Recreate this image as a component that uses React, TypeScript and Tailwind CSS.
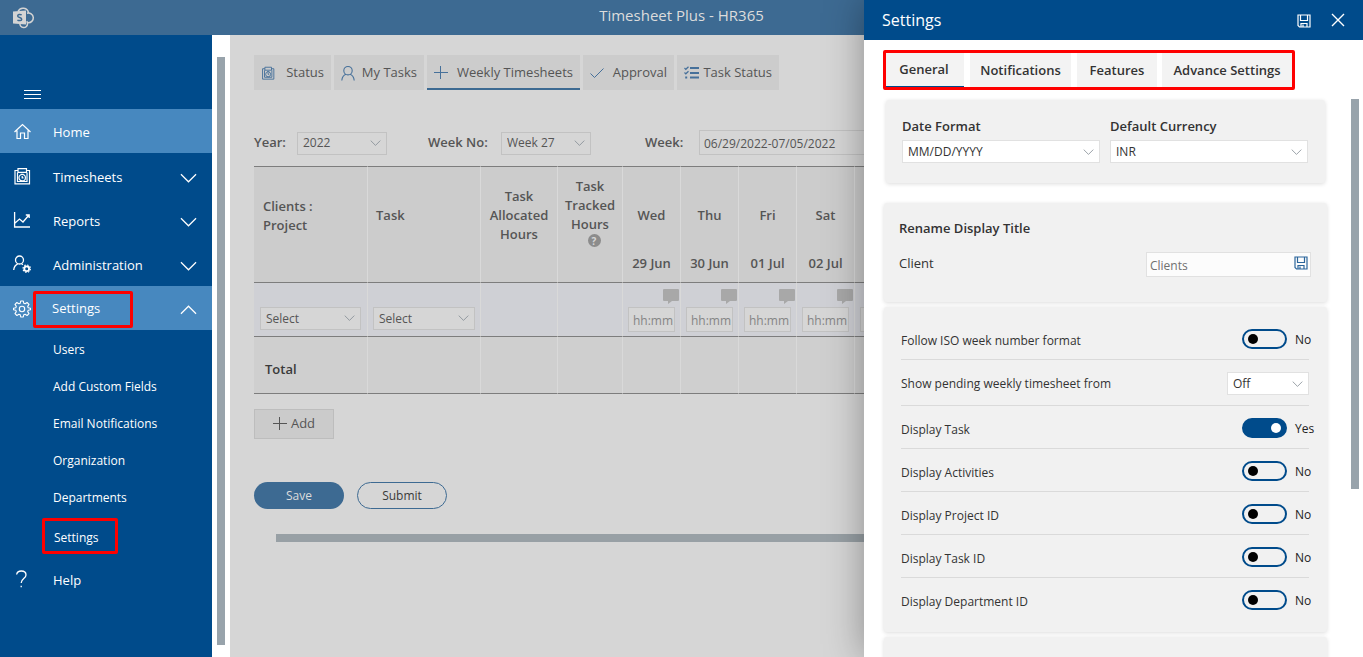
import React, { useState } from "react";

const sans = "font-['Open_Sans','Noto_Sans',sans-serif]";

type SvgProps = { className?: string };

const Chevron = ({ className = "" }: SvgProps) => (
  <svg viewBox="0 0 18 10" fill="none" stroke="currentColor" strokeWidth="1.3" className={className} aria-hidden="true">
    <path d="M1 1l8 8 8-8" />
  </svg>
);

const HomeIcon = () => (
  <svg viewBox="0 0 18 18" width="18" height="18" fill="none" stroke="currentColor" strokeWidth="1.2" aria-hidden="true">
    <path d="M1.500 10L9.500 2.600 17.500 10M4 8.500V16.500h3.500V11h4v5.500H15V8.500" />
  </svg>
);

const TimesheetIcon = ({ size = 18 }: { size?: number }) => (
  <svg viewBox="0 0 18 18" width={size} height={size} fill="none" stroke="currentColor" strokeWidth="1.2" aria-hidden="true">
    <path d="M5 3.500H2v13.400h14.500V3.500H13.500M5 1.600h8.500v3.800H5zM4.500 5.500v9h9.500v-9" />
    <circle cx="9.200" cy="10.700" r="3.200" />
    <path d="M9.200 9v1.800h1.300M7.800 7.300h2.800" />
  </svg>
);

const ChartIcon = () => (
  <svg viewBox="0 0 18 18" width="18" height="18" fill="none" stroke="currentColor" strokeWidth="1.3" aria-hidden="true">
    <path d="M1.600 1v15H17M2 12l4.500-4 3.500 3 6-7M12.800 4H16.200v3" />
  </svg>
);

const PersonIcon = () => (
  <svg viewBox="0 0 14 16" width="14" height="16" fill="none" stroke="currentColor" strokeWidth="1.100" aria-hidden="true">
    <circle cx="7" cy="5.700" r="4.200" />
    <path d="M.8 15.500c.3-3.400 2-5.400 4.200-6.200M13.200 15.500c-.3-3.400-2-5.400-4.200-6.200" />
  </svg>
);

const AdminIcon = () => (
  <svg viewBox="0 0 18 18" width="18" height="18" fill="none" stroke="currentColor" strokeWidth="1.3" aria-hidden="true">
    <circle cx="6.500" cy="5" r="4" />
    <path d="M.7 15c.3-3.200 1.500-5 4-6.200M8.500 8.800l1.500.9" />
    <circle cx="13.700" cy="13.700" r="2.400" strokeWidth="1.800" />
    <circle cx="13.700" cy="13.700" r="3.700" strokeWidth="1.200" strokeDasharray="1.500 1.400" />
  </svg>
);

const GearIcon = () => (
  <svg viewBox="0 0 18 18" width="18" height="18" fill="none" stroke="currentColor" strokeWidth="1.100" strokeLinejoin="round" aria-hidden="true">
    <path d="M7.700 1h2.600l.5 2.300 1.300.5 2-1.300 1.900 1.900-1.300 2 .5 1.300 2.300.5v1.600l-2.300.5-.5 1.300 1.300 2-1.900 1.900-2-1.300-1.300.5-.5 2.300H7.700l-.5-2.300-1.300-.5-2 1.300L2 13.600l1.300-2-.5-1.300L.5 9.800V8.200l2.300-.5.5-1.300-1.300-2L3.900 2.500l2 1.300 1.300-.5z" />
    <circle cx="9" cy="9" r="2.700" />
  </svg>
);

const HelpIcon = () => (
  <svg viewBox="0 0 18 18" width="18" height="18" fill="none" stroke="currentColor" strokeWidth="1.3" aria-hidden="true">
    <path d="M3.600 4.500C4 2.300 5.800 1 8.300 1c2.700 0 4.700 1.600 4.700 4 0 3.700-4.800 3.600-4.800 8M8.200 15.700v1.500" />
  </svg>
);

const SaveIcon = () => (
  <svg viewBox="0 0 14 14" width="14" height="14" fill="none" stroke="currentColor" strokeWidth="1.200" aria-hidden="true">
    <path d="M1 1h12v12H2.500L1 11.500zM3.500 1v5.500h7V1M4 13V9.500h6V13M6 10.500V13" />
  </svg>
);

const CloseIcon = () => (
  <svg viewBox="0 0 14 14" width="14" height="14" fill="none" stroke="currentColor" strokeWidth="1.400" aria-hidden="true">
    <path d="M1 1l12 12M13 1L1 13" />
  </svg>
);

const PlusIcon = () => (
  <svg viewBox="0 0 14 14" width="14" height="14" fill="none" stroke="currentColor" aria-hidden="true">
    <path d="M6.500 0v13M0 6.500h14" />
  </svg>
);

const CheckIcon = () => (
  <svg viewBox="0 0 14 12" width="14" height="12" fill="none" stroke="currentColor" aria-hidden="true">
    <path d="M.5 6.500l4 4 9-9" />
  </svg>
);

const TaskListIcon = () => (
  <svg viewBox="0 0 15 13" width="15" height="13" fill="none" stroke="currentColor" strokeWidth="1.200" aria-hidden="true">
    <path d="M.5 2l1.300 1.300L4.500.7M.5 6.500l1.300 1.300L4.500 5.200" />
    <path d="M6 2h9M6 7h9M6 11.500h9" strokeWidth="1.800" />
    <path d="M1.200 11.500h2" strokeWidth="2" />
  </svg>
);

const CommentIcon = () => (
  <svg viewBox="0 0 16 15" width="16" height="15" fill="currentColor" aria-hidden="true">
    <path d="M1 0h14a1 1 0 011 1v10a1 1 0 01-1 1H9l-4 3v-3H1a1 1 0 01-1-1V1a1 1 0 011-1z" />
  </svg>
);

const SharePointLogo = () => (
  <svg viewBox="0 0 22 22" width="22" height="22" aria-hidden="true" className="text-[#d4d4d4]">
    <g fill="none" stroke="currentColor" strokeWidth="1.500">
      <path d="M5 4.500A5.500 5.500 0 0115.500 6" />
      <path d="M14 6.300a4.800 4.800 0 11.800 9.300" />
      <path d="M7 16a3.800 3.800 0 107.500.5c0-1-.3-1.500-.8-2.200" />
    </g>
    <path d="M0 4.500L13 3.500v14L0 16.500z" fill="currentColor" />
    <path d="M8.700 7.900c-1.800-.8-4-.4-4 1 0 1.900 4 1.300 4 3.300 0 1.500-2.500 1.800-4.300.9" fill="none" stroke="#3d6a92" strokeWidth="1.500" />
  </svg>
);

type DropProps = { label: string; value: string; options: string[]; id: string; className?: string; tone?: string };

const Dropdown = ({ label, value, options, id, className = "", tone = "border-[#e1e1e1] bg-white text-[#333]" }: DropProps) => (
  <div className={`grid items-center ${className}`}>
    <select
      id={id}
      aria-label={label}
      defaultValue={value}
      className={`col-start-1 row-start-1 h-[23px] w-full appearance-none border pl-[5px] pr-6 text-[12px] outline-none ${tone}`}
    >
      {options.map((o) => (
        <option key={o}>{o}</option>
      ))}
    </select>
    <Chevron className="pointer-events-none col-start-1 row-start-1 mr-1.5 h-[6px] w-[11px] justify-self-end text-[#808890]" />
  </div>
);

const dimTone = "border-[#c2c2c2] bg-[#d6d6d6] text-[#555]";

const menu = [
  { label: "Home", icon: <HomeIcon />, active: true, expand: false },
  { label: "Timesheets", icon: <TimesheetIcon />, active: false, expand: true },
  { label: "Reports", icon: <ChartIcon />, active: false, expand: true },
  { label: "Administration", icon: <AdminIcon />, active: false, expand: true },
];

const subMenu = ["Users", "Add Custom Fields", "Email Notifications", "Organization", "Departments"];

const Sidebar = () => (
  <div className="flex w-[230px] shrink-0 bg-white">
    <nav className="flex w-[212px] flex-col bg-[#004b8b] text-[13px] text-white">
      <div className="flex h-[74px] items-end pb-2.5 pl-6">
        <button aria-label="Toggle menu" className="flex flex-col gap-[3px]">
          <span className="h-px w-[17px] bg-white" />
          <span className="h-px w-[17px] bg-white" />
          <span className="h-px w-[17px] bg-white" />
        </button>
      </div>
      {menu.map((m) => (
        <a
          key={m.label}
          href="#"
          className={`flex h-11 items-center pl-[13px] pr-[15px] ${m.active ? "mb-px bg-[#4788bf]" : ""}`}
        >
          {m.icon}
          <span className="ml-[22px] flex-1 pt-[3px]">{m.label}</span>
          {m.expand && <Chevron className="mt-[3px] h-[10px] w-[17px]" />}
        </a>
      ))}
      <a href="#" className="flex h-11 items-center bg-[#4788bf] pt-0.5 pl-[13px] pr-[15px]">
        <GearIcon />
        <span className="ml-0.5 flex h-[37px] w-[100px] items-center rounded-[2px] border-3 border-[#fe0000] pl-4">Settings</span>
        <Chevron className="mt-0.5 ml-auto h-[10px] w-[17px] rotate-180" />
      </a>
      <div className="flex flex-col text-[12px]">
        {subMenu.map((s) => (
          <a key={s} href="#" className="flex h-[37px] items-center pt-0.5 pl-[53px]">
            {s}
          </a>
        ))}
        <a href="#" className="mt-[3px] ml-[42px] flex h-9 w-[76px] items-center rounded-[2px] border-3 border-[#fe0000] pt-[3px] pl-[9px]">
          Settings
        </a>
      </div>
      <a href="#" className="mt-[3px] flex h-11 items-center pl-[13px]">
        <HelpIcon />
        <span className="ml-[22px] pt-[3px]">Help</span>
      </a>
    </nav>
    <div className="flex flex-1 justify-center pt-[22px] pb-3">
      <div className="w-2 bg-[#98a3ab]" />
    </div>
  </div>
);

const tabs = [
  { label: "Status", icon: <TimesheetIcon size={14} />, width: "w-[77px]" },
  { label: "My Tasks", icon: <PersonIcon />, width: "w-[90px]" },
  { label: "Weekly Timesheets", icon: <PlusIcon />, width: "w-[153px]" },
  { label: "Approval", icon: <CheckIcon />, width: "w-[91px]" },
  { label: "Task Status", icon: <TaskListIcon />, width: "w-[102px]" },
];

const days = [
  ["Wed", "29 Jun"],
  ["Thu", "30 Jun"],
  ["Fri", "01 Jul"],
  ["Sat", "02 Jul"],
];

const th = "border-r border-r-[#d9d9d9] border-y border-y-[#7d7d7d] bg-[#cccccc] font-semibold";
const td = "border-r border-r-[#d9d9d9] border-b border-b-[#7d7d7d]";

const HoursField = ({ label, placeholder }: { label: string; placeholder?: string }) => (
  <input
    aria-label={label}
    placeholder={placeholder}
    className="h-[25px] w-[47px] border border-[#c2c2c2] bg-[#d6d6d6] pt-[3px] pl-1 text-[12px] outline-none placeholder:text-[#858585]"
  />
);

const Timesheet = () => (
  <table className="mt-[11px] w-[659px] table-fixed border-separate border-spacing-0 text-[13px] leading-[19px] text-[#555]">
    <colgroup>
      <col className="w-[114px]" />
      <col className="w-[113px]" />
      <col className="w-[77px]" />
      <col className="w-[65px]" />
      {days.map((d) => (
        <col key={d[0]} className="w-[58px]" />
      ))}
      <col className="w-[58px]" />
    </colgroup>
    <thead>
      <tr className="h-[117px]">
        <th className={`${th} pb-[18px] pl-[9px] text-left`}>
          Clients :<br />
          Project
        </th>
        <th className={`${th} pb-[18px] pl-2 text-left`}>Task</th>
        <th className={`${th} pb-[18px]`}>Task Allocated Hours</th>
        <th className={`${th} pb-[25px]`}>
          Task Tracked Hours
          <span className="flex justify-center pl-2">
            <span className="flex size-[13px] items-center justify-center rounded-full bg-[#8c8c8c] text-[10px] leading-none font-bold text-[#d6d6d6]">
              ?
            </span>
          </span>
        </th>
        {days.map((d) => (
          <th key={d[0]} className={th}>
            <div className="pt-[29px] pb-[29px]">{d[0]}</div>
            <div>{d[1]}</div>
          </th>
        ))}
        <th className={th} />
      </tr>
    </thead>
    <tbody>
      <tr className="h-[54px] bg-[#cfd0d5]">
        <td className={`${td} px-1.5 pt-[17px]`}>
          <Dropdown id="client" label="Client" value="Select" options={["Select"]} tone={dimTone} />
        </td>
        <td className={`${td} px-[5px] pt-[17px]`}>
          <Dropdown id="task" label="Task" value="Select" options={["Select"]} tone={dimTone} />
        </td>
        <td className={td} />
        <td className={td} />
        {days.map((d) => (
          <td key={d[0]} className={`${td} pt-px`}>
            <div className="flex flex-col gap-[3px] pl-[5px]">
              <button aria-label={`Comment ${d[0]}`} className="self-end pr-px text-[#a8a8a8]">
                <CommentIcon />
              </button>
              <HoursField label={`Hours ${d[1]}`} placeholder="hh:mm" />
            </div>
          </td>
        ))}
        <td className={`${td} pt-[19px] pl-[5px]`}>
          <HoursField label="Hours 03 Jul" />
        </td>
      </tr>
      <tr className="h-[57px] bg-[#cfcfcf]">
        <td className={`${td} pt-2 pl-[11px] font-semibold text-[#3a3a3a]`}>Total</td>
        {Array.from({ length: 8 }, (_, i) => (
          <td key={i} className={td} />
        ))}
      </tr>
    </tbody>
  </table>
);

const Main = () => (
  <main className="flex min-w-0 flex-1 flex-col overflow-hidden bg-[#d6d6d6] pt-5 pl-6 text-[13px] text-[#555]">
    <div className="flex gap-[3px]">
      {tabs.map((t) => (
        <button
          key={t.label}
          className={`flex h-[35px] shrink-0 items-center justify-between bg-[#cccccc] px-[7px] whitespace-nowrap ${t.width} ${
            t.label === "Weekly Timesheets" ? "border-b-2 border-[#3d6a92] pt-0.5" : ""
          }`}
        >
          <span className="text-[#46709a]">{t.icon}</span>
          {t.label}
        </button>
      ))}
    </div>
    <div className="mt-10 flex h-[25px] items-center">
      <label htmlFor="year" className="w-[43px] font-semibold">
        Year:
      </label>
      <Dropdown id="year" label="Year" value="2022" options={["2021", "2022"]} className="w-[90px] pt-px" tone={dimTone} />
      <label htmlFor="week-no" className="ml-[41px] w-[73px] font-semibold">
        Week No:
      </label>
      <Dropdown id="week-no" label="Week No" value="Week 27" options={["Week 26", "Week 27"]} className="w-[90px] pt-px" tone={dimTone} />
      <label htmlFor="week" className="ml-[54px] w-[54px] font-semibold">
        Week:
      </label>
      <input
        id="week"
        defaultValue="06/29/2022-07/05/2022"
        className="h-[25px] w-[200px] border border-[#c2c2c2] bg-[#d6d6d6] pt-0.5 pl-1 text-[12px] outline-none"
      />
    </div>
    <Timesheet />
    <button className="mt-[15px] flex h-[30px] w-20 items-center justify-center gap-1 border border-[#bdbdbd] bg-[#cbcbcb]">
      <PlusIcon />
      Add
    </button>
    <div className="mt-[43px] flex gap-[13px] text-[12px]">
      <button className="h-[27px] w-[90px] rounded-full bg-[#3d6a92] text-[#dcdcdc]">Save</button>
      <button className="h-[27px] w-[90px] rounded-full border border-[#3d6a92] text-[#3a3a3a]">Submit</button>
    </div>
    <div className="mt-[25px] ml-[22px] h-2 bg-[#98a0a5]" />
  </main>
);

const Toggle = ({ id, initial }: { id: string; initial: boolean }) => {
  const [on, setOn] = useState(initial);
  return (
    <div className="flex w-[67px] shrink-0 items-center gap-2">
      <input
        id={id}
        type="checkbox"
        role="switch"
        checked={on}
        onChange={() => setOn(!on)}
        className="flex h-5 w-[45px] shrink-0 appearance-none items-center rounded-full border-2 border-[#004b8b] px-1 before:size-2.5 before:rounded-full before:bg-black checked:justify-end checked:bg-[#004b8b] checked:before:bg-white"
      />
      <span className="pt-0.5 text-[#222]">{on ? "Yes" : "No"}</span>
    </div>
  );
};

const settings = [
  { id: "iso", label: "Follow ISO week number format", on: false },
  { id: "pending", label: "Show pending weekly timesheet from", on: null },
  { id: "d-task", label: "Display Task", on: true },
  { id: "d-act", label: "Display Activities", on: false },
  { id: "d-proj", label: "Display Project ID", on: false },
  { id: "d-taskid", label: "Display Task ID", on: false },
  { id: "d-dept", label: "Display Department ID", on: false },
];

const card = "rounded-[3px] bg-[#f1f1f1] shadow-[0_1px_4px_rgba(0,0,0,0.14)]";

const SettingsPanel = () => (
  <aside className="absolute inset-y-0 right-0 flex w-[499px] flex-col overflow-hidden bg-white text-[13px] text-[#333] shadow-[0_0_36px_rgba(0,0,0,0.35)]">
    <header className="flex h-10 shrink-0 items-center bg-[#004b8b] pr-[18px] pl-[18px] text-white">
      <h2 className="flex-1 text-[16px]">Settings</h2>
      <button aria-label="Save settings" className="pt-0.5">
        <SaveIcon />
      </button>
      <button aria-label="Close" className="ml-5">
        <CloseIcon />
      </button>
    </header>
    <div className="mt-2.5 ml-[19px] flex h-10 w-[412px] shrink-0 rounded-[2px] border-3 border-[#fe0000] font-semibold whitespace-nowrap">
      <button className="mr-1.5 w-[78px] border-b border-[#004b8b] bg-[#f3f3f3] pr-0.5">General</button>
      <button className="mr-1.5 w-[101px] bg-[#f3f3f3] pt-0.5">Notifications</button>
      <button className="mr-[5px] w-20 bg-[#f3f3f3] pt-0.5">Features</button>
      <button className="flex-1 bg-[#f3f3f3] pt-0.5">Advance Settings</button>
    </div>
    <div className="flex min-h-0 flex-1 justify-between pt-[9px] pr-1 pl-5">
      <div className="flex w-[443px] flex-col pt-px">
        <section className={`mr-0.5 ml-0.5 flex h-[83px] shrink-0 gap-2.5 pt-[17px] pr-[17px] pl-4 ${card}`}>
          <div className="flex-1">
            <label htmlFor="date-format" className="block h-[23px] font-semibold">
              Date Format
            </label>
            <Dropdown id="date-format" label="Date Format" value="MM/DD/YYYY" options={["MM/DD/YYYY", "DD/MM/YYYY"]} />
          </div>
          <div className="flex-1">
            <label htmlFor="currency" className="block h-[23px] font-semibold">
              Default Currency
            </label>
            <Dropdown id="currency" label="Default Currency" value="INR" options={["INR", "USD"]} />
          </div>
        </section>
        <section className={`mt-5 h-[99px] shrink-0 pt-4 pr-4 pl-[15px] ${card}`}>
          <h3 className="font-semibold">Rename Display Title</h3>
          <div className="mt-[13px] flex items-start justify-between">
            <label htmlFor="client-title" className="pt-0.5">
              Client
            </label>
            <div className="flex h-[25px] w-[165px] items-center border border-[#e1e1e1] bg-[#fcfcfc] pr-0.5 pl-[3px]">
              <input
                id="client-title"
                placeholder="Clients"
                className="min-w-0 flex-1 bg-transparent pt-[3px] text-[12px] outline-none placeholder:text-[#707070]"
              />
              <button aria-label="Save client title" className="pb-0.5 text-[#2b659b]">
                <SaveIcon />
              </button>
            </div>
          </div>
        </section>
        <section className={`mt-[5px] h-[325px] shrink-0 pt-2.5 pr-[18px] pl-[17px] text-[12px] ${card}`}>
          {settings.map((s) => (
            <div
              key={s.id}
              className={`flex items-center justify-between border-b border-[#dadada] pt-0.5 last:border-transparent ${
                s.on === null ? "h-[46px]" : "h-[43px]"
              }`}
            >
              <label htmlFor={s.id} className={s.on === null ? "" : "pt-[3px]"}>
                {s.label}
              </label>
              {s.on === null ? (
                <Dropdown id={s.id} label={s.label} value="Off" options={["Off", "Monday"]} className="w-[82px]" />
              ) : (
                <Toggle id={s.id} initial={s.on} />
              )}
            </div>
          ))}
        </section>
        <section className={`mt-[5px] h-20 shrink-0 ${card}`} />
      </div>
      <div className="h-[390px] w-2 bg-[#98a3ab]" />
    </div>
  </aside>
);

export default function App() {
  return (
    <div className={`relative flex h-screen flex-col overflow-hidden bg-[#d6d6d6] ${sans}`}>
      <header className="flex h-[35px] shrink-0 items-center bg-[#3d6a92] pl-[13px] text-[15px] text-[#dcdcdc]">
        <SharePointLogo />
        <h1 className="flex-1 pr-[35px] pb-1 text-center">Timesheet Plus - HR365</h1>
      </header>
      <div className="flex min-h-0 flex-1">
        <Sidebar />
        <Main />
      </div>
      <SettingsPanel />
    </div>
  );
}
